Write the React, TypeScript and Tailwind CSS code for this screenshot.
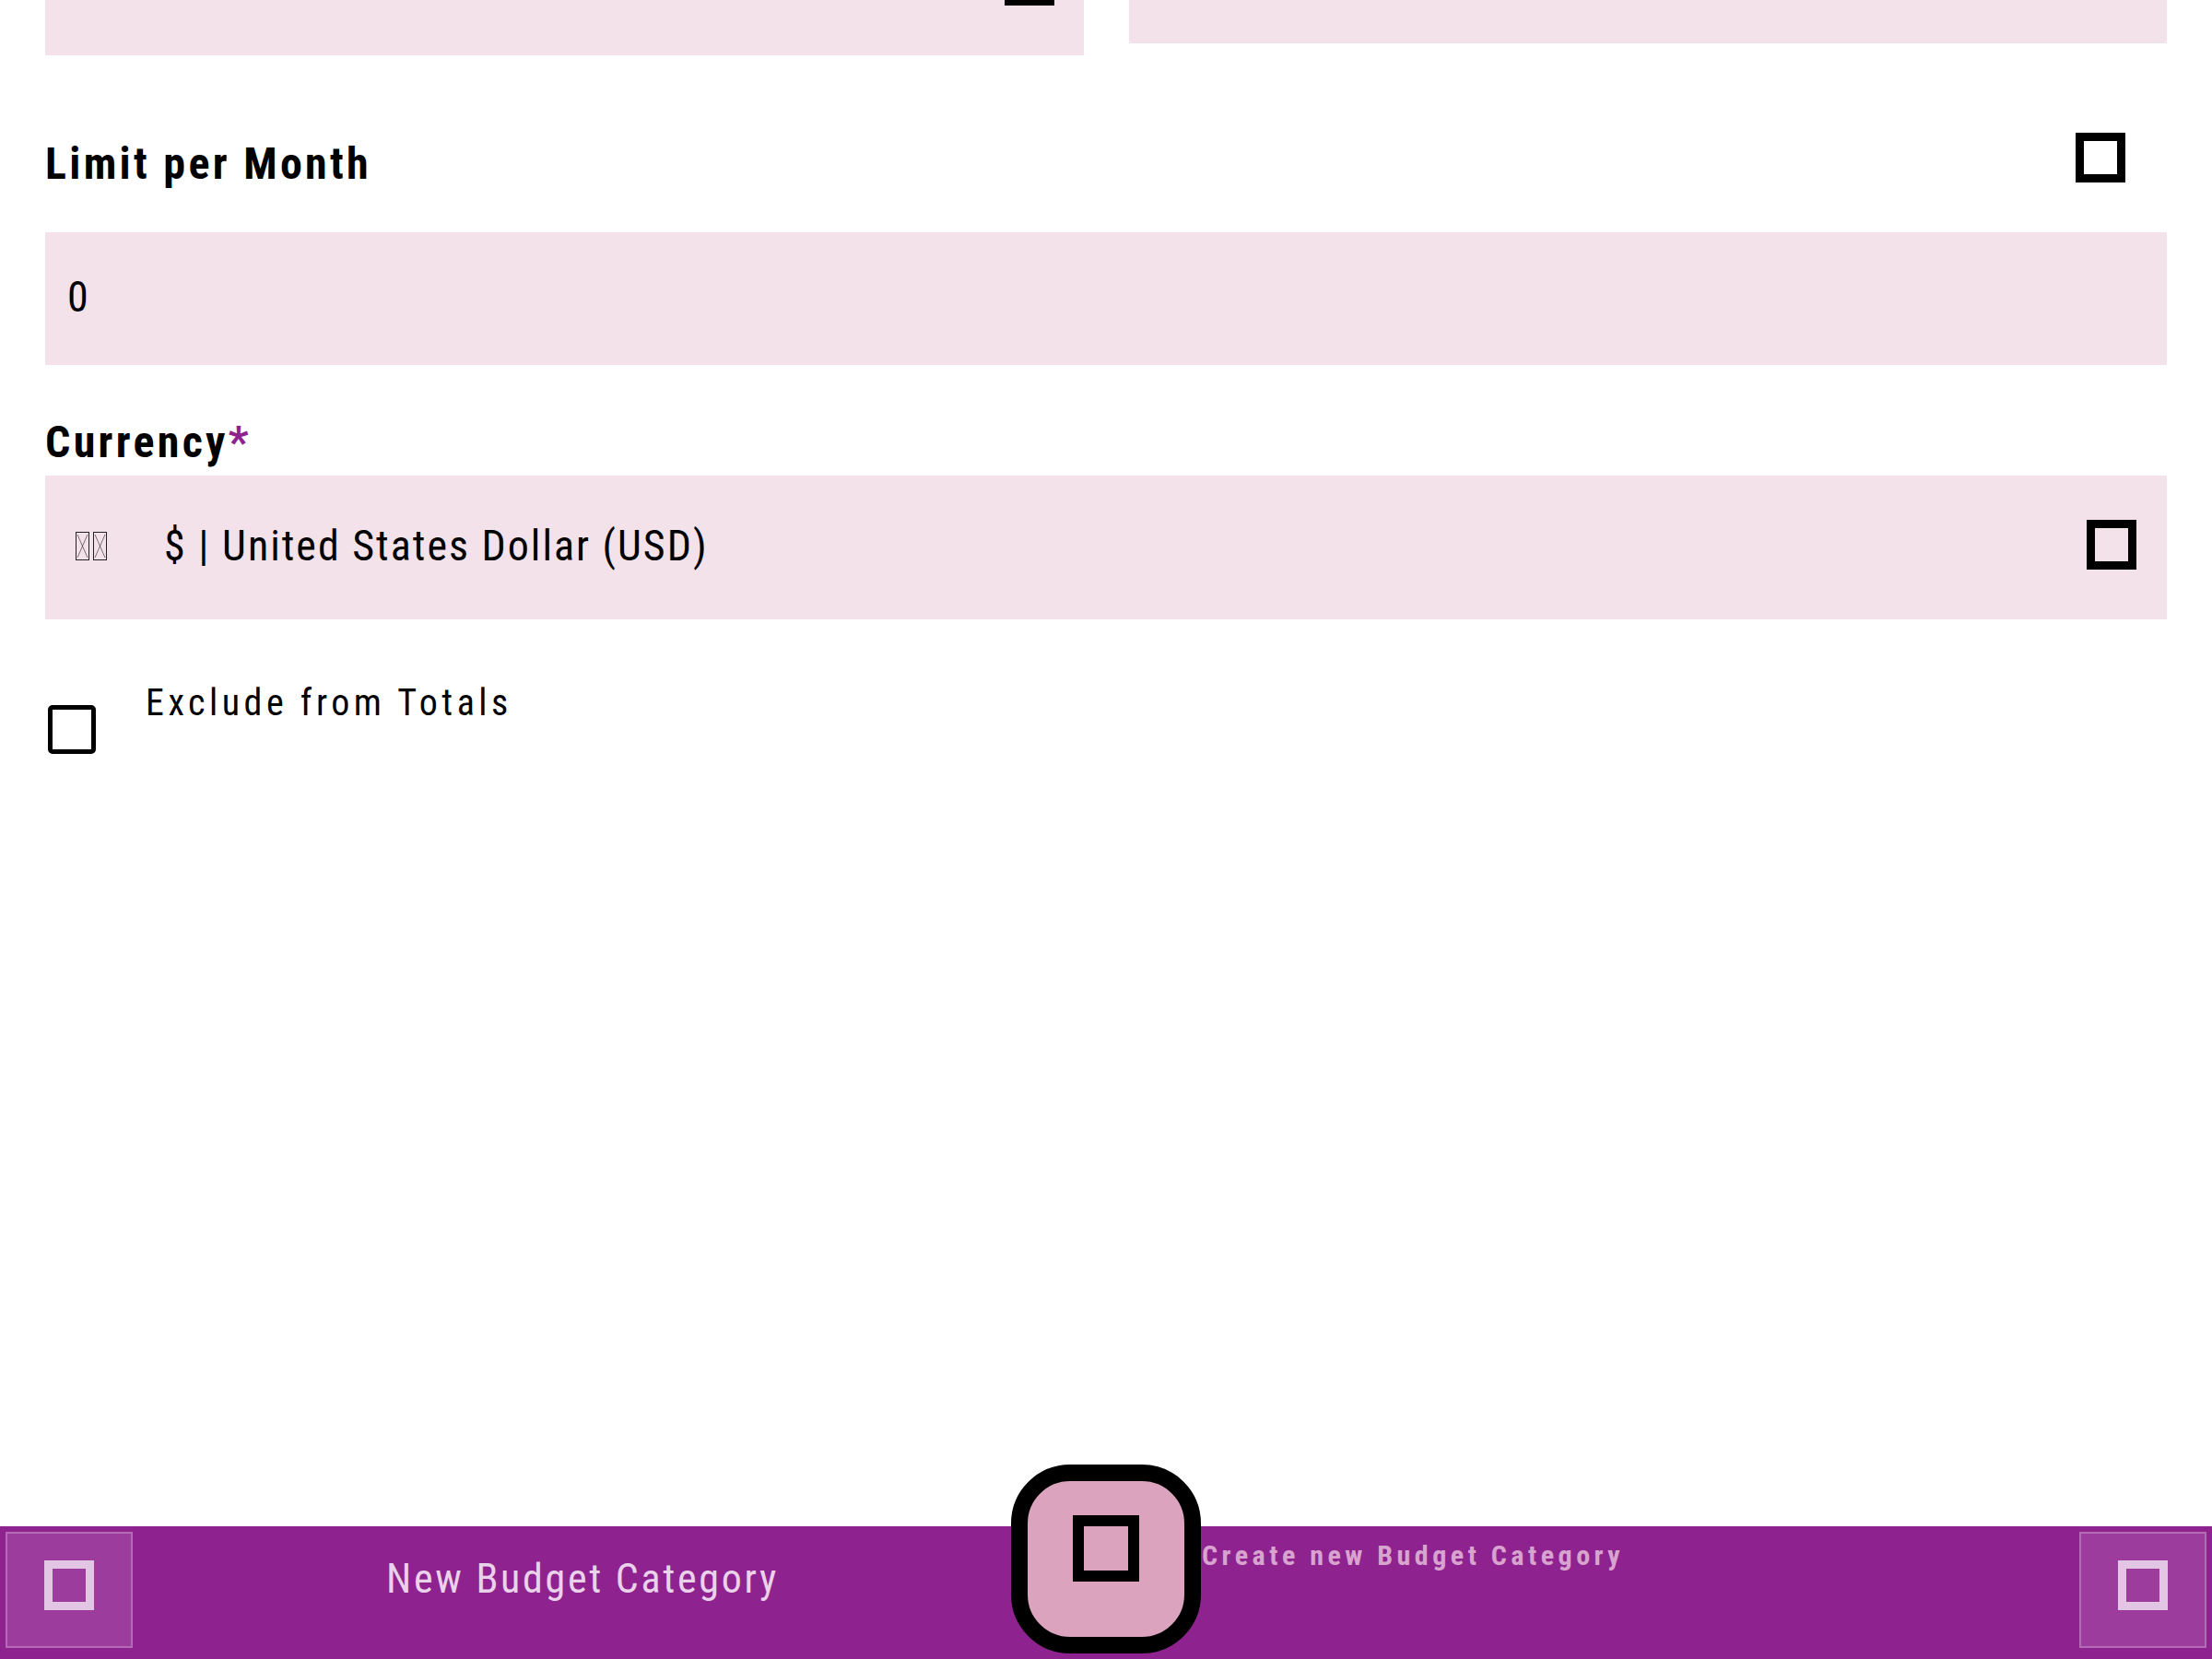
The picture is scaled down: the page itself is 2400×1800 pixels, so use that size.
import React from "react";

// tofu box the app shows for icons whose font never loaded
function IconBox({ className = "" }: { className?: string }) {
  return <div className={`w-[54px] h-[54px] border-[9px] ${className}`} />;
}

function FlagTofu() {
  return (
    <svg width="34" height="31" viewBox="0 0 34 31" className="shrink-0">
      {[0, 19].map((x) => (
        <g key={x} stroke="#222" strokeWidth="1" fill="none">
          <rect x={x + 0.5} y="0.5" width="14" height="30" />
          <path d={`M${x + 2} 3 L${x + 13} 28 M${x + 13} 3 L${x + 2} 28`} strokeWidth="0.6" />
        </g>
      ))}
    </svg>
  );
}

export default function App() {
  return (
    <div
      className="relative w-[2400px] h-[1800px] flex flex-col bg-white text-black overflow-hidden font-stretch-condensed"
      style={{ fontFamily: "'Roboto Condensed', Roboto, 'Noto Sans', sans-serif" }}
    >
      <div className="flex-1 px-[49px]">
        {/* fields cut off by the scroll */}
        <div className="grid grid-cols-2 gap-[49px] items-start">
          <div className="h-[60px] bg-[#f3e2ea] flex justify-end pr-[32px]">
            <IconBox className="-mt-[48px] border-black" />
          </div>
          <div className="h-[47px] bg-[#f3e2ea]" />
        </div>

        {/* Limit per Month */}
        <div className="mt-[84px] flex items-start justify-between pr-[45px]">
          <h2 className="mt-[10px] text-[48px] leading-none font-bold tracking-[3.3px]">Limit per Month</h2>
          <IconBox className="border-black" />
        </div>
        <div className="mt-[50px] h-[144px] bg-[#f3e2ea] flex items-center px-[24px]">
          <span className="text-[46px] leading-none -mt-[4px]">0</span>
        </div>

        {/* Currency */}
        <h2 className="mt-[60px] text-[48px] leading-none font-bold tracking-[3.3px]">
          Currency<span className="text-[#8e238f]">*</span>
        </h2>
        <div className="mt-[12px] h-[156px] bg-[#f3e2ea] flex items-center pl-[33px] pr-[33px]">
          <div className="-mt-[4px] flex items-center">
            <FlagTofu />
            <span className="ml-[62px] text-[46px] leading-none tracking-[2px]">$ | United States Dollar (USD)</span>
          </div>
          <IconBox className="ml-auto -mt-[6px] border-black" />
        </div>

        {/* Exclude from Totals */}
        <label className="mt-[71px] flex items-start">
          <span className="mt-[22px] ml-[3px] w-[52px] h-[53px] rounded-[5px] border-[5px] border-black" />
          <span className="ml-[54px] text-[40px] leading-none tracking-[4.5px]">Exclude from Totals</span>
        </label>
      </div>

      {/* bottom bar */}
      <div className="relative h-[144px] bg-[#8e238f] flex items-start px-[6px] pt-[6px]">
        <button className="w-[138px] h-[126px] bg-[#9c3c9c] border-2 border-[#b56ab5] flex items-center justify-center">
          <IconBox className="-mt-[10px] border-[#e3c6e3]" />
        </button>
        <span className="ml-[275px] mt-[29px] text-[44px] leading-none tracking-[2.7px] text-[#ead2ea]">
          New Budget Category
        </span>
        <button className="ml-auto w-[138px] h-[126px] bg-[#9c3c9c] border-2 border-[#b56ab5] flex items-center justify-center">
          <IconBox className="-mt-[10px] border-[#e3c6e3]" />
        </button>

        {/* docked action button */}
        <div className="absolute left-[1097px] -top-[67px] w-[206px] h-[205px] rounded-[64px] border-[18px] border-black bg-[#dba3bd] flex items-center justify-center">
          <div className="w-[72px] h-[72px] border-[12px] border-black -mt-[24px]" />
        </div>
        <span className="absolute left-[1304px] top-[17px] text-[30px] leading-none font-bold tracking-[4.5px] text-[#d9a3d0]">
          Create new Budget Category
        </span>
      </div>
    </div>
  );
}
